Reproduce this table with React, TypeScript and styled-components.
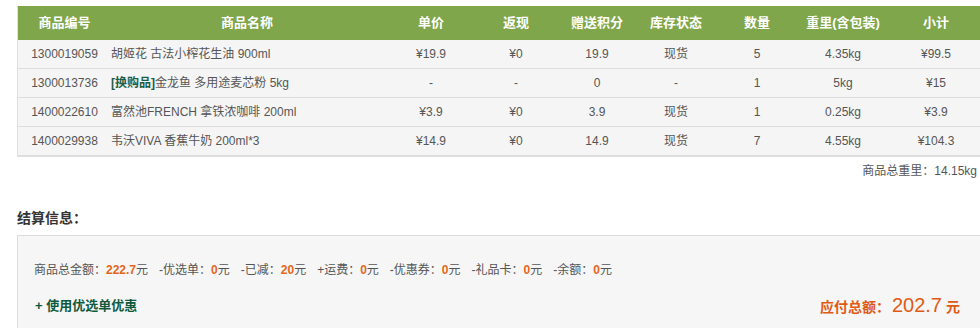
import React from "react";
import styled, { createGlobalStyle } from "styled-components";

const Global = createGlobalStyle`
  html, body { margin: 0; padding: 0; background: #fff; overflow: hidden; }
  body { font-family: "Liberation Sans", Arial, "Noto Sans CJK SC", sans-serif; font-size: 12px; color: #555; }
`;

const Page = styled.div`
  width: 980px;
  padding: 6px 0 0 17px;
`;

const Table = styled.table`
  width: 971px;
  border-collapse: collapse;
  table-layout: fixed;
  border-left: 1px solid #e0e0e0;
`;

const HeadCell = styled.th<{ $w: number }>`
  width: ${(p) => p.$w}px;
  height: 34px;
  padding: 0;
  background: #7fa64a;
  color: #fff;
  font-size: 13px;
  line-height: 16px;
  font-weight: bold;
  text-align: center;
`;

const Row = styled.tr<{ $last?: boolean }>`
  background: #f5f5f5;
  border-bottom: ${(p) => (p.$last ? "2px solid #dedede" : "1px solid #dedede")};
`;

const Cell = styled.td<{ $left?: boolean }>`
  height: 28px;
  padding: 0;
  line-height: 16px;
  vertical-align: middle;
  text-align: ${(p) => (p.$left ? "left" : "center")};
  color: #555;
  font-size: 12px;
  white-space: nowrap;
`;

const Tag = styled.b`
  color: #1b5e45;
`;

const WeightLine = styled.div`
  width: 960px;
  height: 16px;
  text-align: right;
  margin-top: 6px;
  line-height: 16px;
  color: #555;
`;

const Heading = styled.h3`
  margin: 30px 0 0;
  height: 18px;
  font-size: 14px;
  line-height: 18px;
  font-weight: bold;
  color: #333;
`;

const Box = styled.div`
  margin-top: 8px;
  width: 980px;
  height: 120px;
  background: #f6f6f6;
  border-top: 1px solid #dcdcdc;
  border-left: 1px solid #dcdcdc;
  padding: 26px 0 0 16px;
  box-sizing: border-box;
`;

const Summary = styled.div`
  display: flex;
  gap: 11px;
  height: 16px;
  line-height: 16px;
  color: #555;
`;

const Item = styled.span``;

const Num = styled.b`
  color: #e4661c;
  font-weight: bold;
`;

const Bottom = styled.div`
  display: flex;
  align-items: center;
  justify-content: space-between;
  width: 928px;
  margin-top: 15px;
  height: 26px;
`;

const UseLink = styled.a`
  color: #0f5a3e;
  font-weight: bold;
  font-size: 13px;
  line-height: 16px;
  text-decoration: none;
  padding-left: 1px;
`;

const Total = styled.div`
  color: #e05a14;
  font-weight: bold;
  font-size: 14px;
  line-height: 24px;
  display: flex;
  align-items: baseline;
  margin-right: 2px;
`;

const Big = styled.span`
  font-size: 20px;
  font-weight: normal;
  margin: 0 4px 0 2px;
`;

const cols = [
  { t: "商品编号", w: 93 },
  { t: "商品名称", w: 272 },
  { t: "单价", w: 96 },
  { t: "返现", w: 74 },
  { t: "赠送积分", w: 88 },
  { t: "库存状态", w: 70 },
  { t: "数量", w: 92 },
  { t: "重里(含包装)", w: 80 },
  { t: "小计", w: 106 },
];

const rows = [
  ["1300019059", "胡姬花 古法小榨花生油 900ml", "¥19.9", "¥0", "19.9", "现货", "5", "4.35kg", "¥99.5"],
  ["1300013736", "金龙鱼 多用途麦芯粉 5kg", "-", "-", "0", "-", "1", "5kg", "¥15"],
  ["1400022610", "富然池FRENCH 拿铁浓咖啡 200ml", "¥3.9", "¥0", "3.9", "现货", "1", "0.25kg", "¥3.9"],
  ["1400029938", "韦沃VIVA 香蕉牛奶 200ml*3", "¥14.9", "¥0", "14.9", "现货", "7", "4.55kg", "¥104.3"],
];

const fees: [string, string][] = [
  ["商品总金额：", "222.7"],
  ["-优选单：", "0"],
  ["-已减：", "20"],
  ["+运费：", "0"],
  ["-优惠券：", "0"],
  ["-礼品卡：", "0"],
  ["-余额：", "0"],
];

export default function App() {
  return (
    <Page>
      <Global />
      <Table>
        <thead>
          <tr>
            {cols.map((c) => (
              <HeadCell key={c.t} $w={c.w}>
                {c.t}
              </HeadCell>
            ))}
          </tr>
        </thead>
        <tbody>
          {rows.map((r, i) => (
            <Row key={r[0]} $last={i === rows.length - 1}>
              {r.map((v, j) => (
                <Cell key={j} $left={j === 1}>
                  {j === 1 && i === 1 ? <Tag>[换购品]</Tag> : null}
                  {v}
                </Cell>
              ))}
            </Row>
          ))}
        </tbody>
      </Table>
      <WeightLine>商品总重里：14.15kg</WeightLine>
      <Heading>结算信息：</Heading>
      <Box>
        <Summary>
          {fees.map(([k, v]) => (
            <Item key={k}>
              {k}
              <Num>{v}</Num>元
            </Item>
          ))}
        </Summary>
        <Bottom>
          <UseLink href="#">+ 使用优选单优惠</UseLink>
          <Total>
            应付总额：<Big>202.7</Big>元
          </Total>
        </Bottom>
      </Box>
    </Page>
  );
}
